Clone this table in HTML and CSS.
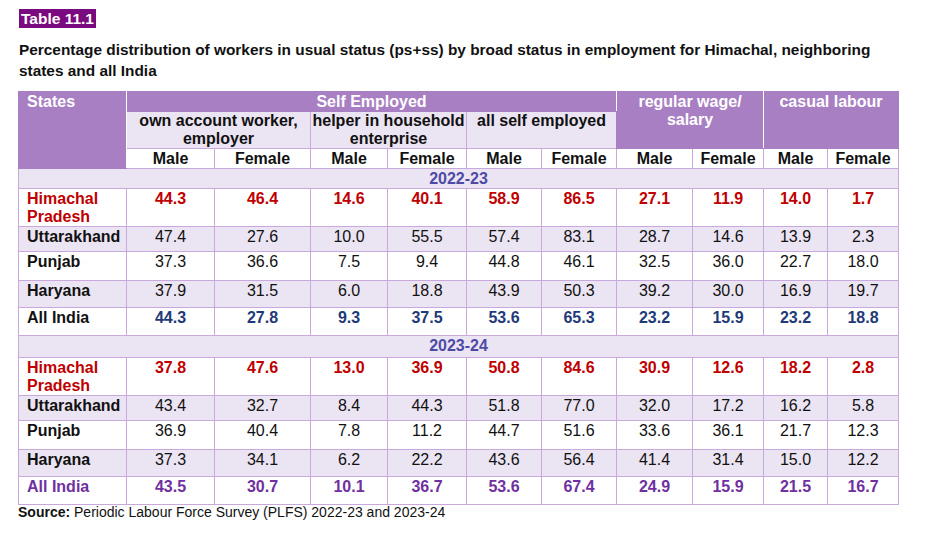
FILE: index.html
```html
<!DOCTYPE html>
<html>
<head>
<meta charset="utf-8">
<link rel="stylesheet" href="styles.css">
</head>
<body>
<div class="page">
  <div class="tag">Table 11.1</div>
  <h1 class="title">Percentage distribution of workers in usual status (ps+ss) by broad status in employment for Himachal, neighboring states and all India</h1>
  <table class="tbl">
    <colgroup>
      <col class="c-state"><col class="c1"><col class="c2"><col class="c3"><col class="c4"><col class="c5"><col class="c6"><col class="c7"><col class="c8"><col class="c9"><col class="c10">
    </colgroup>
    <thead>
      <tr class="h1">
        <th rowspan="3" class="hp left sep">States</th>
        <th colspan="6" class="hp sep">Self Employed</th>
        <th colspan="2" rowspan="2" class="hp sep">regular wage/ salary</th>
        <th colspan="2" rowspan="2" class="hp">casual labour</th>
      </tr>
      <tr class="h2">
        <th colspan="2" class="hl">own account worker, employer</th>
        <th colspan="2" class="hl">helper in household enterprise</th>
        <th colspan="2" class="hl">all self employed</th>
      </tr>
      <tr class="h3">
        <th>Male</th><th>Female</th><th>Male</th><th>Female</th><th>Male</th><th>Female</th><th>Male</th><th>Female</th><th>Male</th><th>Female</th>
      </tr>
    </thead>
    <tbody>
      <tr class="year y1"><td colspan="11">2022-23</td></tr>
      <tr class="r-hp hi"><td class="left">Himachal Pradesh</td><td>44.3</td><td>46.4</td><td>14.6</td><td>40.1</td><td>58.9</td><td>86.5</td><td>27.1</td><td>11.9</td><td>14.0</td><td>1.7</td></tr>
      <tr class="r-ut alt"><td class="left b">Uttarakhand</td><td>47.4</td><td>27.6</td><td>10.0</td><td>55.5</td><td>57.4</td><td>83.1</td><td>28.7</td><td>14.6</td><td>13.9</td><td>2.3</td></tr>
      <tr class="r-pb"><td class="left b">Punjab</td><td>37.3</td><td>36.6</td><td>7.5</td><td>9.4</td><td>44.8</td><td>46.1</td><td>32.5</td><td>36.0</td><td>22.7</td><td>18.0</td></tr>
      <tr class="r-hr alt"><td class="left b">Haryana</td><td>37.9</td><td>31.5</td><td>6.0</td><td>18.8</td><td>43.9</td><td>50.3</td><td>39.2</td><td>30.0</td><td>16.9</td><td>19.7</td></tr>
      <tr class="r-ai ai1"><td class="left">All India</td><td>44.3</td><td>27.8</td><td>9.3</td><td>37.5</td><td>53.6</td><td>65.3</td><td>23.2</td><td>15.9</td><td>23.2</td><td>18.8</td></tr>
      <tr class="year y2"><td colspan="11">2023-24</td></tr>
      <tr class="r-hp hi"><td class="left">Himachal Pradesh</td><td>37.8</td><td>47.6</td><td>13.0</td><td>36.9</td><td>50.8</td><td>84.6</td><td>30.9</td><td>12.6</td><td>18.2</td><td>2.8</td></tr>
      <tr class="r-ut alt"><td class="left b">Uttarakhand</td><td>43.4</td><td>32.7</td><td>8.4</td><td>44.3</td><td>51.8</td><td>77.0</td><td>32.0</td><td>17.2</td><td>16.2</td><td>5.8</td></tr>
      <tr class="r-pb"><td class="left b">Punjab</td><td>36.9</td><td>40.4</td><td>7.8</td><td>11.2</td><td>44.7</td><td>51.6</td><td>33.6</td><td>36.1</td><td>21.7</td><td>12.3</td></tr>
      <tr class="r-hr alt"><td class="left b">Haryana</td><td>37.3</td><td>34.1</td><td>6.2</td><td>22.2</td><td>43.6</td><td>56.4</td><td>41.4</td><td>31.4</td><td>15.0</td><td>12.2</td></tr>
      <tr class="r-ai ai2"><td class="left">All India</td><td>43.5</td><td>30.7</td><td>10.1</td><td>36.7</td><td>53.6</td><td>67.4</td><td>24.9</td><td>15.9</td><td>21.5</td><td>16.7</td></tr>
    </tbody>
  </table>
  <p class="source"><b>Source:</b> Periodic Labour Force Survey (PLFS) 2022-23 and 2023-24</p>
</div>
</body>
</html>
```

FILE: styles.css
```css
html, body {
  margin: 0;
  padding: 0;
  background: #ffffff;
}
body {
  font-family: "Liberation Sans", Arial, sans-serif;
  color: #111111;
}
.page {
  padding: 9px 0 0 18px;
}
.tag {
  display: inline-block;
  background: #7a0a80;
  color: #ffffff;
  font-weight: bold;
  font-size: 15.5px;
  line-height: 19px;
  padding: 0 2px 0 2px;
  margin-left: 1px;
}
.title {
  margin: 11px 0 0 1px;
  font-size: 15.4px;
  line-height: 21px;
  font-weight: bold;
  width: 880px;
}
.tbl {
  margin-top: 10px;
  border-collapse: collapse;
  table-layout: fixed;
  width: 880px;
  font-size: 16px;
}
.c-state { width: 108px; }
.c1 { width: 88px; }
.c2 { width: 96px; }
.c3 { width: 77px; }
.c4 { width: 79px; }
.c5 { width: 75px; }
.c6 { width: 75px; }
.c7 { width: 76px; }
.c8 { width: 71px; }
.c9 { width: 64px; }
.c10 { width: 71px; }

.tbl th, .tbl td {
  border: 1.5px solid #c9a8dd;
  padding: 1px 1px 0 1px;
  text-align: center;
  vertical-align: top;
  line-height: 18px;
  overflow: hidden;
}
.tbl th {
  font-weight: bold;
  color: #111111;
}
.tbl th.hp {
  background: #a97fc4;
  color: #ffffff;
  border-color: #a97fc4;
}
.tbl th.hp.sep {
  border-right: 1.5px solid #ffffff;
}
.tbl th.left, .tbl td.left {
  text-align: left;
  padding-left: 8px;
}
.tbl th.hl {
  background: #ebe4f3;
  padding-top: 0;
}
.h1 th { height: 17px; }
.h2 th { height: 34px; }
.h3 th { height: 17px; background: #ffffff; }

.year td {
  background: #ebe4f3;
  color: #4d4aa6;
  font-weight: bold;
}
.y1 td { height: 18px; }
.y2 td { height: 20px; }

.alt td { background: #ebe4f3; }
.r-hp td { height: 36px; }
.r-ut td { height: 23px; }
.r-pb td { height: 27px; }
.r-hr td { height: 25px; }
.r-ai td { height: 26px; }

.hi td {
  color: #c00000;
  font-weight: bold;
}
.b { font-weight: bold; }
.ai1 td {
  color: #1f3a78;
  font-weight: bold;
}
.ai1 td.left { color: #111111; }
.ai2 td {
  color: #7030a0;
  font-weight: bold;
}
.source {
  margin: 0;
  font-size: 14px;
  line-height: 15px;
}
```
